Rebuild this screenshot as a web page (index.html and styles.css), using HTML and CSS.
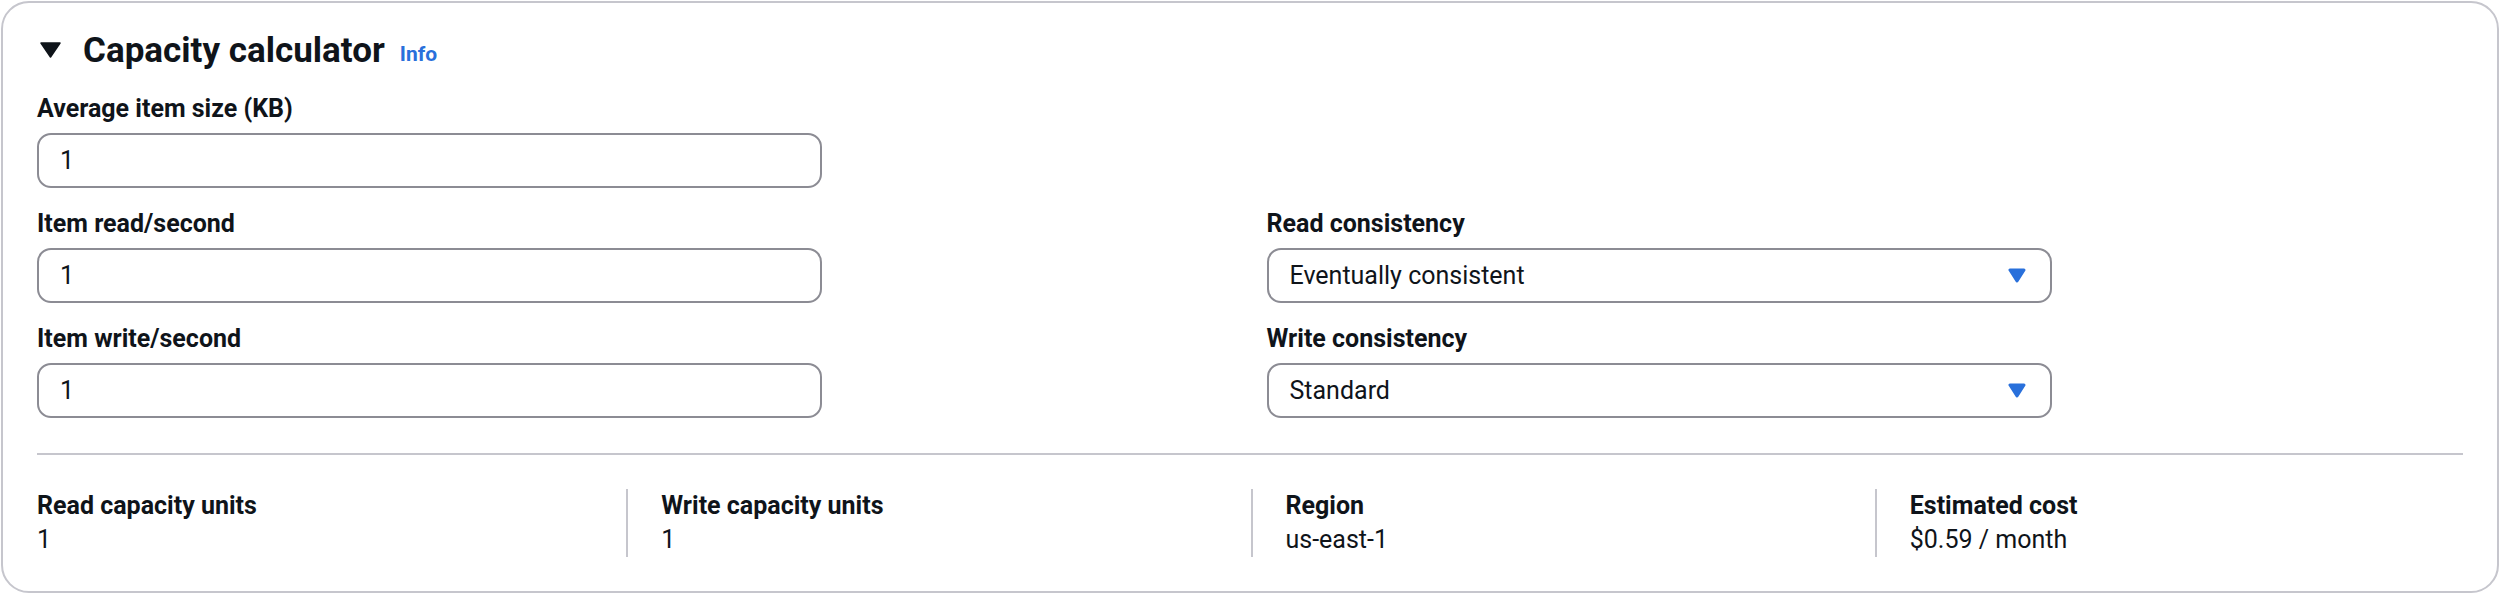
FILE: index.html
```html
<!DOCTYPE html>
<html lang="en">
<head>
<meta charset="utf-8">
<title>Capacity calculator</title>
<link rel="stylesheet" href="styles.css">
</head>
<body>
<section class="card">
  <header class="card-header">
    <svg class="expand-icon" width="21" height="16" viewBox="0 0 21 16" aria-hidden="true"><polygon points="1,1 20,1 10.5,15" fill="#0f141a" stroke="#0f141a" stroke-width="1.5" stroke-linejoin="round"/></svg>
    <h2 class="card-title">Capacity calculator</h2>
    <a class="info-link" href="#">Info</a>
  </header>

  <div class="form-grid">
    <div class="field">
      <label class="field-label">Average item size (KB)</label>
      <div class="control input">1</div>
    </div>
    <div class="field"></div>

    <div class="field">
      <label class="field-label">Item read/second</label>
      <div class="control input">1</div>
    </div>
    <div class="field">
      <label class="field-label">Read consistency</label>
      <div class="control select">
        <span>Eventually consistent</span>
        <svg class="caret" width="18" height="15" viewBox="0 0 18 15" aria-hidden="true"><polygon points="2,2 16,2 9,13" fill="#2970db" stroke="#2970db" stroke-width="3" stroke-linejoin="round"/></svg>
      </div>
    </div>

    <div class="field">
      <label class="field-label">Item write/second</label>
      <div class="control input">1</div>
    </div>
    <div class="field">
      <label class="field-label">Write consistency</label>
      <div class="control select">
        <span>Standard</span>
        <svg class="caret" width="18" height="15" viewBox="0 0 18 15" aria-hidden="true"><polygon points="2,2 16,2 9,13" fill="#2970db" stroke="#2970db" stroke-width="3" stroke-linejoin="round"/></svg>
      </div>
    </div>
  </div>

  <hr class="divider">

  <div class="stats">
    <div class="stat">
      <div class="stat-label">Read capacity units</div>
      <div class="stat-value">1</div>
    </div>
    <div class="stat">
      <div class="stat-label">Write capacity units</div>
      <div class="stat-value">1</div>
    </div>
    <div class="stat">
      <div class="stat-label">Region</div>
      <div class="stat-value">us-east-1</div>
    </div>
    <div class="stat">
      <div class="stat-label">Estimated cost</div>
      <div class="stat-value">$0.59 / month</div>
    </div>
  </div>
</section>
</body>
</html>
```

FILE: styles.css
```css
* {
  box-sizing: border-box;
}

html, body {
  margin: 0;
  padding: 0;
  background: #ffffff;
}

body {
  font-family: Roboto, "Noto Sans", "Liberation Sans", sans-serif;
  color: #0f141a;
}

.card {
  margin: 1px;
  border: 2px solid #c6c6cd;
  border-radius: 28px;
  padding: 24px 34px 34px 34px;
  background: #ffffff;
}

.card-header {
  display: flex;
  align-items: center;
  height: 48px;
}

.expand-icon {
  display: block;
  margin-left: 3px;
  margin-right: 22px;
  margin-top: -2px;
}

.card-title {
  margin: 0;
  font-size: 35px;
  line-height: 48px;
  font-weight: 700;
}

.info-link {
  margin-left: 15px;
  margin-top: 6px;
  font-size: 21px;
  font-weight: 700;
  color: #2970db;
  text-decoration: none;
  line-height: 48px;
}

.form-grid {
  margin-top: 17px;
  display: grid;
  grid-template-columns: 1fr 1fr;
  column-gap: 33px;
  row-gap: 19px;
}

.field {
  display: flex;
  flex-direction: column;
  gap: 7px;
}

.field-label {
  font-size: 25px;
  line-height: 34px;
  font-weight: 700;
}

.control {
  width: 785px;
  height: 55px;
  border: 2px solid #8c8c94;
  border-radius: 14px;
  padding: 0 24px 0 21px;
  font-size: 25px;
  line-height: 51px;
  display: flex;
  align-items: center;
}

.select {
  justify-content: space-between;
}

.caret {
  display: block;
}

.divider {
  margin: 35px 0 0 0;
  border: 0;
  height: 2px;
  background: #c6c6cd;
}

.stats {
  margin: 34px -36px 0 -35px;
  display: grid;
  grid-template-columns: repeat(4, 1fr);
}

.stat {
  border-left: 2px solid #c6c6cd;
  padding-left: 33px;
}

.stat:first-child {
  border-left-color: transparent;
}

.stat-label {
  font-size: 25px;
  line-height: 34px;
  font-weight: 700;
}

.stat-value {
  font-size: 25px;
  line-height: 34px;
}
```
